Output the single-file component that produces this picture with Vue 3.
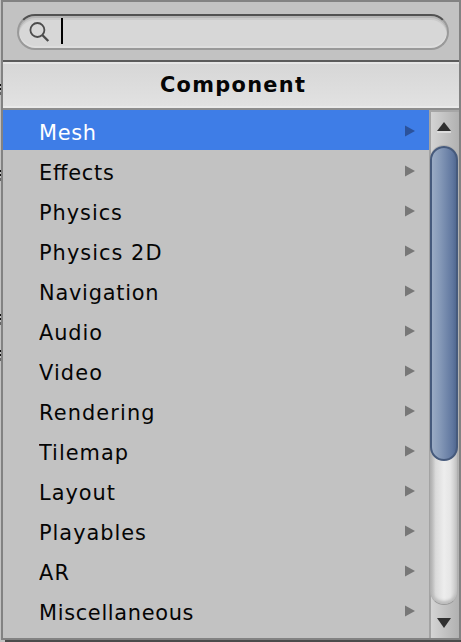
<script setup>
import { ref } from 'vue'

const query = ref('')
const selected = ref(0)
const items = [
  'Mesh', 'Effects', 'Physics', 'Physics 2D', 'Navigation', 'Audio', 'Video',
  'Rendering', 'Tilemap', 'Layout', 'Playables', 'AR', 'Miscellaneous',
]
// Label widths in pixels; glyphs are condensed horizontally and tracked out to fit.
const widths = [57, 75, 83, 122.5, 119.5, 63, 63, 115.5, 89, 76, 107, 30, 154.5]
const condense = 0.95
const backdropMarks = [84, 170, 314, 350]
</script>

<template>
  <div class="page">
    <i v-for="y in backdropMarks" :key="y" class="mark" :style="{ top: y + 'px' }"></i>
    <div class="popup">
      <div class="search-area">
        <div class="search">
          <svg class="lens" viewBox="0 0 22 22" width="22" height="22">
            <circle cx="8.4" cy="8" r="7" />
            <path class="handle" d="M13.3 13 L19.3 19" />
          </svg>
          <span class="caret"></span>
          <span>{{ query }}</span>
        </div>
      </div>
      <div class="header">
        <svg width="456" height="46">
          <text transform="translate(157 30) scale(0.95 1)" textLength="152.5">Component</text>
        </svg>
      </div>
      <div class="body">
        <ul class="list">
          <li v-for="(item, i) in items" :key="item" :class="{ selected: i === selected }" @click="selected = i">
            <svg class="label" width="180" height="40">
              <text transform="translate(0 30) scale(0.95 1)" :textLength="widths[i] / condense">{{ item }}</text>
            </svg>
            <svg class="arrow" viewBox="0 0 10 12" width="10" height="12"><path d="M0 0.5 L10 6 L0 11.5 Z" /></svg>
          </li>
        </ul>
        <div class="scrollbar">
          <div class="button up"><svg width="14" height="11" viewBox="0 0 14 11"><path class="shine" d="M0 9h14v2H0z" /><path d="M7 0 L14 9 H0 Z" /></svg></div>
          <div class="track"><div class="thumb"></div></div>
          <div class="button down"><svg width="14" height="10" viewBox="0 0 14 10"><path d="M0 0 H14 L7 10 Z" /></svg></div>
        </div>
      </div>
    </div>
  </div>
</template>

<style>
body { margin: 0; overflow: hidden; }
</style>

<style scoped>
.page {
  position: relative;
  box-sizing: border-box;
  width: 461px;
  height: 642px;
  padding-left: 1px;
  overflow: hidden;
  background: linear-gradient(#4b4b4b, #4b4b4b) 5px 640px / 456px 2px no-repeat, #c2c2c2;
  font-family: "DejaVu Sans", Verdana, sans-serif;
  font-size: 22px;
  color: #050505;
}
.mark {
  position: absolute;
  left: 0;
  width: 1px;
  height: 11px;
  background: linear-gradient(#111 0 2px, #c2c2c2 2px 4px, #111 4px 6px, #c2c2c2 6px 8px, #666 8px);
}
.popup {
  box-sizing: border-box;
  width: 460px;
  height: 640px;
  border: 2px solid #828282;
  background: #c2c2c2;
  display: flex;
  flex-direction: column;
}
.search-area {
  height: 58px;
  box-sizing: border-box;
  padding: 12px 10px 10px 14px;
}
.search {
  box-sizing: border-box;
  height: 36px;
  display: flex;
  align-items: flex-start;
  border: 2px solid #999;
  border-top-color: #515151;
  border-radius: 18px;
  background: #d7d7d7;
  box-shadow: inset 0 2px #b5b5b5, inset 0 4px #cacaca, inset 0 -2px #dedede;
}
.lens { margin: 6px 0 0 10px; fill: none; stroke: #4c4c4c; stroke-width: 1.8; }
.handle { stroke-width: 2.4; }
.caret { width: 2px; height: 26px; margin: 2px 0 0 10px; background: #000; }
.header {
  box-sizing: border-box;
  height: 50px;
  border-top: 2px solid #5b5b5b;
  border-bottom: 2px solid #8d8d8d;
  background: linear-gradient(#d6d6d6, #e2e2e2);
  box-shadow: inset 0 2px #e5e5e5, inset 0 -2px #eaeaea;
  font-weight: bold;
  fill: #050505;
}
.header svg { display: block; }
.body { height: 528px; display: flex; }
.list { width: 426px; margin: 0; padding: 0; list-style: none; overflow: hidden; }
.list li { height: 40px; display: flex; align-items: center; }
.label { margin-left: 36px; fill: #050505; }
.selected { background: #3e7de7; }
.selected .label { fill: #fff; }
.arrow { margin: 2px 0 0 186px; fill: #777; }
.selected .arrow { fill: #2b529b; }
.scrollbar {
  box-sizing: border-box;
  width: 30px;
  border-left: 2px solid #a3a3a3;
  border-top: 2px solid #a6a6a6;
  background: linear-gradient(90deg, #d4d4d4, #b1b1b1);
  display: flex;
  flex-direction: column;
}
.button { height: 33px; display: flex; justify-content: center; fill: #303030; }
.button svg { margin-right: 2px; }
.up svg { margin-top: 10px; }
.shine { fill: #ddd; }
.down svg { margin-top: 13px; }
.track {
  box-sizing: border-box;
  height: 460px;
  margin-right: 1px;
  margin-left: -1px;
  border-radius: 14px;
  border: 1px solid #b0b0b0;
  border-bottom-color: #999;
  background: linear-gradient(90deg, #b0b0b0, #dadada 18%, #ededed 50%, #e5e5e5 75%, #c3c3c3);
  box-shadow: inset 0 -3px 3px #bbb;
}
.thumb {
  box-sizing: border-box;
  height: 315px;
  margin: 0 -1px;
  border: 2px solid #465a7c;
  border-radius: 14px;
  background: linear-gradient(90deg, #9aabc4, #8498b7 35%, #60779f 85%, #526991);
}
</style>
